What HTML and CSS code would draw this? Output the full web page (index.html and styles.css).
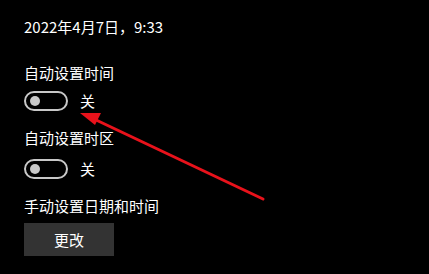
FILE: index.html
```html
<!DOCTYPE html>
<html>
<head>
   <meta charset="utf-8" />
   <title>日期和时间</title>
   <link rel="stylesheet" href="styles.css">
</head>
<body>
   <div class="settings">
       <div class="current-time">2022年4月7日，9:33</div>
       <div class="setting-label first">自动设置时间</div>
       <div class="toggle-row">
           <span class="toggle"><span class="knob"></span></span>
           <span class="toggle-state">关</span>
       </div>
       <div class="setting-label">自动设置时区</div>
       <div class="toggle-row second">
           <span class="toggle"><span class="knob"></span></span>
           <span class="toggle-state">关</span>
       </div>
       <div class="setting-label">手动设置日期和时间</div>
       <button class="change-btn">更改</button>
   </div>
   <!-- annotation arrow drawn over the screenshot -->
   <svg class="arrow" width="429" height="274" viewBox="0 0 429 274">
       <line x1="263" y1="199" x2="94" y2="119" stroke="#e8121b" stroke-width="3" stroke-linecap="round" />
       <polygon points="80,113 101,113 95,125" fill="#e8121b" />
   </svg>
</body>
</html>
```

FILE: styles.css
```css
body, html {
    margin: 0;
    width: 100%;
    height: 100%;
    overflow: hidden;
    background-color: #000;
    position: relative; /* reference for the arrow overlay */
}
.settings {
    padding: 17px 0 0 24px;
    color: #fff;
    font-family: "Noto Sans CJK SC", "Noto Sans", sans-serif;
    font-size: 15px;
    line-height: 20px;
}
.current-time {
    height: 20px;
}
.setting-label {
    height: 20px;
    margin-top: 17px;
}
.setting-label.first {
    margin-top: 26px;
}
.toggle-row {
    display: flex;
    align-items: center;
    gap: 12px;
    margin-top: 8px;
    height: 20px;
}
.toggle-row.second {
    margin-top: 11px;
}
.toggle {
    box-sizing: border-box;
    width: 44px;
    height: 20px;
    border: 2px solid #c8c8c8;
    border-radius: 10px;
    display: flex;
    align-items: center;
    padding-left: 4px;
}
.knob {
    width: 10px;
    height: 10px;
    border-radius: 50%;
    background-color: #c8c8c8;
}
.toggle-state {
    line-height: 20px;
}
.change-btn {
    display: block;
    margin-top: 7px;
    width: 90px;
    height: 33px;
    border: none;
    background-color: #333;
    color: #fff;
    font-family: inherit;
    font-size: 15px;
    padding: 0;
}
.arrow {
    position: absolute;
    top: 0;
    left: 0;
    pointer-events: none;
}
```
